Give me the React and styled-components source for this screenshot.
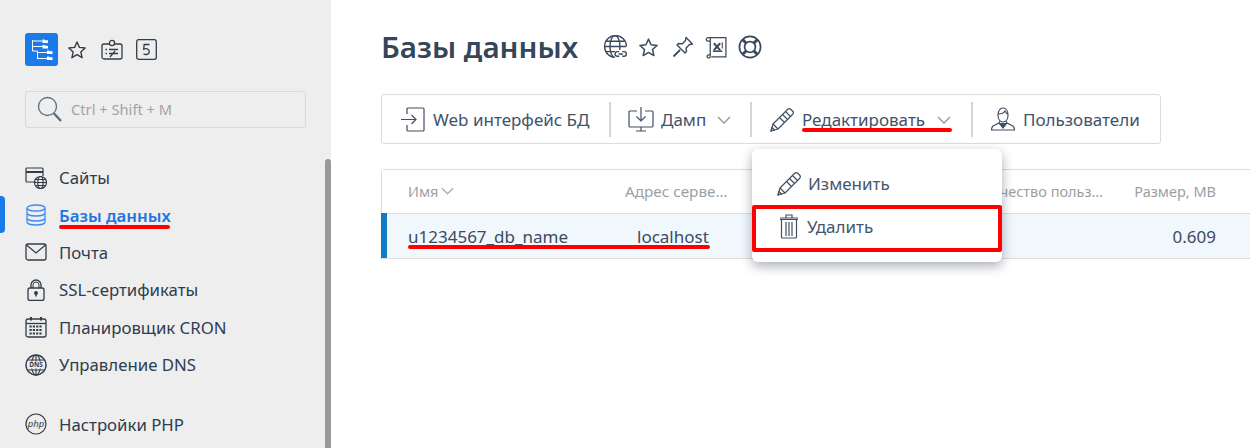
import styled, { createGlobalStyle } from "styled-components";

const GlobalStyle = createGlobalStyle`
	html, body {
		margin: 0;
		padding: 0;
		height: 100%;
		overflow: hidden;
		background: #fff;
	}
	body {
		font-family: "Noto Sans", "Open Sans", sans-serif;
		color: #2f3d50;
	}
`;

const Page = styled.div`
	display: flex;
	width: 1250px;
	height: 448px;
	overflow: hidden;
`;

const Sidebar = styled.aside`
	position: relative;
	flex: 0 0 331px;
	box-sizing: border-box;
	padding: 33px 25px 0;
	background: #eeeeee;
	overflow: hidden;
`;

const Scrollbar = styled.div`
	position: absolute;
	top: 159px;
	right: 0;
	bottom: 0;
	width: 6px;
	background: #999999;
	border-radius: 3px 3px 0 0;
`;

const TopIcons = styled.div`
	display: flex;
	align-items: center;
	height: 33px;
`;

const TreeButton = styled.div`
	display: flex;
	width: 33px;
	height: 33px;
	border-radius: 3px;
	background: #1a7ae8;
`;

const TopIcon = styled.span`
	display: flex;
	margin-left: ${(p) => p.$gap}px;
`;

const Search = styled.div`
	display: flex;
	align-items: center;
	box-sizing: border-box;
	width: 281px;
	height: 37px;
	margin-top: 25px;
	padding-left: 11px;
	border: 1px solid #d8d8d8;
	border-radius: 3px;
	font-size: 14.7px;
	color: #a0a4a8;
	span {
		margin-left: 8px;
		margin-top: -2px;
	}
`;

const Nav = styled.nav`
	margin-top: 31px;
`;

const NavItem = styled.div`
	position: relative;
	display: flex;
	align-items: center;
	height: 37.4px;
	margin-top: ${(p) => (p.$spaced ? "22px" : "0")};
	font-size: 16.8px;
	font-weight: ${(p) => (p.$active ? 600 : 400)};
	color: ${(p) => (p.$active ? "#1f75e0" : "#2f3d50")};
	svg {
		flex: 0 0 22px;
		margin-right: 12px;
	}
`;

const ActiveMark = styled.i`
	position: absolute;
	left: -25px;
	top: 0;
	width: 5px;
	height: 37px;
	background: #1a7ae8;
	border-radius: 0 4px 4px 0;
`;

const Underline = styled.i`
	position: absolute;
	left: ${(p) => p.$left}px;
	top: ${(p) => p.$top}px;
	width: ${(p) => p.$width}px;
	height: 4px;
	background: #ff0000;
	border-radius: 2px;
`;

const Main = styled.main`
	flex: 1;
	min-width: 0;
	padding: 27px 0 0 50px;
`;

const TitleRow = styled.div`
	display: flex;
	align-items: center;
	height: 40px;
`;

const Title = styled.h1`
	margin: 0 25px 0 0;
	font-size: 29.6px;
	line-height: 40px;
	font-weight: 600;
	color: #34465a;
`;

const TitleIcons = styled.div`
	display: flex;
	align-items: center;
	color: #3a4a5c;
`;

const TitleIcon = styled.span`
	display: flex;
	margin-left: ${(p) => p.$gap || 0}px;
`;

const Toolbar = styled.div`
	display: flex;
	align-items: center;
	box-sizing: border-box;
	width: 780px;
	height: 50px;
	margin-top: 27px;
	border: 1px solid #dcdcdc;
	border-radius: 3px;
`;

const ToolButton = styled.div`
	position: relative;
	display: flex;
	align-items: center;
	box-sizing: border-box;
	height: 100%;
	width: ${(p) => p.$width}px;
	padding-left: ${(p) => p.$pad}px;
	font-size: 17px;
	color: #41526a;
	white-space: nowrap;
	svg.main {
		margin-right: ${(p) => p.$gap}px;
	}
	svg.chev {
		position: absolute;
		right: ${(p) => p.$chev}px;
		top: 21px;
	}
`;

const Sep = styled.div`
	flex: 0 0 2px;
	height: 35px;
	background: #d4d4d4;
`;

const Table = styled.div`
	position: relative;
	margin-top: 25px;
	border-top: 1px solid #dcdcdc;
	border-left: 1px solid #dcdcdc;
	border-radius: 4px 0 0 0;
`;

const Row = styled.div`
	display: grid;
	grid-template-columns: 217px 129px 1fr 113px 34px;
	align-items: center;
	height: ${(p) => p.$height}px;
	box-sizing: border-box;
	padding-left: 26px;
	border-bottom: 1px solid #dcdcdc;
	background: ${(p) => (p.$selected ? "#f0f7fd" : "#fff")};
`;

const SelectedBar = styled.i`
	position: absolute;
	left: -1px;
	top: 43px;
	width: 6px;
	height: 45px;
	background: #0f7cc4;
`;

const Head = styled.div`
	display: flex;
	align-items: center;
	justify-content: ${(p) => (p.$end ? "flex-end" : "flex-start")};
	margin-top: -2px;
	font-size: ${(p) => p.$size || 14.5}px;
	color: #9b9fa3;
	white-space: nowrap;
	overflow: hidden;
	svg {
		margin-left: 3px;
	}
`;

const Cell = styled.div`
	font-size: 17px;
	color: #3c4b60;
	text-align: ${(p) => (p.$end ? "right" : "left")};
	padding-left: ${(p) => p.$indent || 0}px;
	white-space: nowrap;
`;

const Menu = styled.div`
	position: absolute;
	left: 752px;
	top: 149px;
	width: 250px;
	height: 113px;
	box-sizing: border-box;
	padding-top: 14px;
	background: #fff;
	border-radius: 6px;
	box-shadow: 0 4px 12px rgba(40, 50, 70, 0.4);
`;

const MenuItem = styled.div`
	display: flex;
	align-items: center;
	height: ${(p) => p.$height}px;
	padding-left: ${(p) => p.$pad}px;
	font-size: 17px;
	color: #46566c;
	svg {
		margin-right: ${(p) => p.$gap}px;
	}
`;

const RedBox = styled.div`
	position: absolute;
	left: 0;
	top: 56px;
	width: 250px;
	height: 47px;
	box-sizing: border-box;
	border: 4px solid #ff0000;
	border-radius: 2px;
`;

const Tree = () => (
	<svg width="33" height="33" viewBox="0 0 33 33" fill="none" stroke="#fff" strokeWidth="1">
		<path d="M7.500 7v11M7.500 8h10M7.500 13.500h10M7.500 18h5M12.500 18v8M12.500 19.500h10M12.500 25.500h10" />
		<path d="M17.500 6.500h2l.5.7h3v2.800h-5.500zM17.500 12h2l.5.7h3v2.800h-5.500zM22 17.500h2l.5.7h3v2.800H22zM22 23.500h2l.5.7h3v2.800H22z" fill="#fff" stroke="none" />
	</svg>
);

const Star = ({ size = 20, color = "#333d48" }) => (
	<svg width={size} height={size} viewBox="0 0 20 20" fill="none" stroke={color} strokeWidth="1.4" strokeLinejoin="round">
		<path d="M10 2l2.400 5.400 5.800.6-4.400 3.900 1.300 5.800-5.100-3-5.100 3 1.300-5.800L1.800 8l5.800-.6z" />
	</svg>
);

const Badge = () => (
	<svg width="22" height="22" viewBox="0 0 22 22" fill="none" stroke="#333d48" strokeWidth="1.3">
		<rect x="1" y="5" width="20" height="15" rx="2" />
		<circle cx="11" cy="4" r="2.600" fill="#eee" />
		<path d="M4.500 10.500h1.500M4.500 14.500h1.500M8 10.500h9M8 14.500h9M9 18l5-6" />
	</svg>
);

const CountBox = () => (
	<svg width="21" height="21" viewBox="0 0 21 21" fill="none">
		<rect x="0.7" y="0.7" width="19.6" height="19.6" rx="2" stroke="#333d48" strokeWidth="1.3" />
		<path d="M13.500 5.500H8.200l-.5 4.600c1.600-.8 5.600-.7 5.600 2.500 0 3-3.800 3.400-5.800 2.300" stroke="#333d48" strokeWidth="1.3" />
	</svg>
);

const Loupe = () => (
	<svg width="26" height="27" viewBox="0 0 26 27" fill="none" stroke="#5a6b7c">
		<circle cx="10.500" cy="10.500" r="9" strokeWidth="1.300" />
		<path d="M17 17.500l7 7.500" strokeWidth="2.400" />
	</svg>
);

const Sites = () => (
	<svg width="22" height="22" viewBox="0 0 22 22" fill="none" stroke="#333d48" strokeWidth="1.2">
		<path d="M12 15H2a1 1 0 0 1-1-1V2a1 1 0 0 1 1-1h15a1 1 0 0 1 1 1v7" />
		<path d="M1 5h17" strokeWidth="2" />
		<circle cx="15.500" cy="15.500" r="6" fill="#eee" />
		<ellipse cx="15.500" cy="15.500" rx="2.600" ry="6" />
		<path d="M9.500 15.500h12M10.500 12.500h10M10.500 18.500h10" />
	</svg>
);

const Database = () => (
	<svg width="22" height="22" viewBox="0 0 22 22" fill="none" stroke="#3f8cef" strokeWidth="1.3">
		<ellipse cx="11" cy="4" rx="9" ry="3" />
		<path d="M2 4v14c0 1.700 4 3 9 3s9-1.300 9-3V4M2 9c0 1.700 4 3 9 3s9-1.300 9-3M2 14c0 1.700 4 3 9 3s9-1.300 9-3" />
	</svg>
);

const Mail = () => (
	<svg width="22" height="22" viewBox="0 0 22 22" fill="none" stroke="#333d48" strokeWidth="1.3">
		<rect x="1" y="3" width="20" height="16" rx="2" />
		<path d="M1.500 4l9.500 8 9.500-8" />
	</svg>
);

const Lock = () => (
	<svg width="22" height="22" viewBox="0 0 22 22" fill="none" stroke="#333d48" strokeWidth="1.3">
		<rect x="3" y="9" width="16" height="12.500" rx="2" />
		<path d="M6 9V6a5 5 0 0 1 10 0v3" />
		<path d="M8 9V6a3 3 0 0 1 6 0v3" strokeWidth="1" />
		<circle cx="11" cy="14" r="1.300" fill="#333d48" />
		<path d="M11 14v3.500" strokeWidth="1.500" />
	</svg>
);

const Calendar = () => (
	<svg width="22" height="22" viewBox="0 0 22 22" fill="none" stroke="#333d48" strokeWidth="1.3">
		<rect x="1" y="3" width="20" height="18" rx="2" />
		<path d="M1 7.500h20" />
		<path d="M6 1v3.500M16 1v3.500" strokeWidth="2" />
		<path d="M4.500 10.500h13M4.500 14h13M4.500 17.500h13" strokeWidth="2.200" strokeDasharray="2.200 1.100" />
	</svg>
);

const Dns = () => (
	<svg width="22" height="22" viewBox="0 0 22 22" fill="none" stroke="#333d48" strokeWidth="1.1">
		<circle cx="11" cy="11" r="10" strokeWidth="1.400" />
		<ellipse cx="11" cy="11" rx="4.500" ry="10" />
		<path d="M2.500 6h17M2.500 16h17M11 1v20" />
		<rect x="4.500" y="7.500" width="13" height="7" fill="#eee" stroke="none" />
		<text x="11" y="13.200" textAnchor="middle" fontSize="6.500" fontWeight="700" fill="#333d48" stroke="none">DNS</text>
	</svg>
);

const Php = () => (
	<svg width="22" height="22" viewBox="0 0 22 22" fill="none" stroke="#333d48" strokeWidth="1.2">
		<circle cx="11" cy="11" r="10" />
		<text x="11" y="13.800" textAnchor="middle" fontSize="9.500" fontStyle="italic" fill="#333d48" stroke="none">php</text>
	</svg>
);

const GlobeLink = () => (
	<svg width="25" height="25" viewBox="0 0 24 24" fill="none" stroke="#3a4a5c" strokeWidth="1.300">
		<path d="M12 21.500A10.500 10.500 0 1 1 22.500 11" />
		<ellipse cx="11.500" cy="11" rx="4.800" ry="10.500" />
		<path d="M1 11h21M2.500 6h18M2.500 16h9" />
		<rect x="11" y="14.500" width="13" height="9" rx="3.700" fill="#fff" stroke="none" />
		<path d="M15.500 16h-1.700a2.200 2.200 0 0 0 0 4.400h1.700M18.500 16h1.700a2.200 2.200 0 0 1 0 4.400h-1.700M15 18.200h4" />
	</svg>
);

const Pin = () => (
	<svg width="22" height="22" viewBox="0 0 22 22" fill="none" stroke="#3a4a5c" strokeWidth="1.4" strokeLinejoin="round">
		<path d="M14 1.500l6.500 6.500-3 .5-3.400 3.400.4 3.600-1.500 1.500-8-8 1.500-1.500 3.600.4 3.400-3.400z" />
		<path d="M8 14L1.500 20.500" strokeWidth="1.800" />
	</svg>
);

const Excel = () => (
	<svg width="23" height="23" viewBox="0 0 22 22" fill="none" stroke="#3a4a5c" strokeWidth="1.200">
		<path d="M3 1.500h17v18.500H6M3 1.500a1.800 1.800 0 0 0-1.800 1.800c0 1 .8 1.700 1.800 1.700h2V1.500M5 5v14.500a1.500 1.500 0 0 1-3 0c0-.8.7-1.500 1.500-1.500H5" />
		<path d="M8.500 7l6 6.500M14.500 7l-6 6.500" strokeWidth="2" />
		<path d="M7.500 14.500h9" strokeWidth="1.500" />
		<path d="M16.500 6v6" strokeWidth="1" />
	</svg>
);

const Lifebuoy = () => (
	<svg width="24" height="24" viewBox="0 0 24 24" fill="none" stroke="#3a4a5c" strokeWidth="1.700">
		<circle cx="12" cy="12" r="10.600" />
		<circle cx="12" cy="12" r="5.400" />
		<path d="M4.500 4.500l3.800 3.800M19.500 4.500l-3.800 3.800M4.500 19.500l3.800-3.800M19.500 19.500l-3.800-3.800" strokeWidth="3" />
	</svg>
);

const Enter = () => (
	<svg className="main" width="24" height="25" viewBox="0 0 24 25" fill="none" stroke="#3f4f63" strokeWidth="1.200">
		<path d="M6 7V2a1 1 0 0 1 1-1h15a1 1 0 0 1 1 1v21a1 1 0 0 1-1 1H7a1 1 0 0 1-1-1v-5" />
		<path d="M0 12.500h15M10.500 8l4.500 4.500-4.500 4.500" />
	</svg>
);

const Download = () => (
	<svg className="main" width="26" height="25" viewBox="0 0 26 25" fill="none" stroke="#3f4f63" strokeWidth="1.200">
		<path d="M9 4H2a1 1 0 0 0-1 1v14a1 1 0 0 0 1 1h22a1 1 0 0 0 1-1V5a1 1 0 0 0-1-1h-7" />
		<path d="M13 0v14M8.500 9.500L13 14l4.500-4.500M13 20v4M8 24h10" />
	</svg>
);

const Pencil = ({ className, size = 25 }) => (
	<svg className={className} width={size} height={size} viewBox="0 0 25 25" fill="none" stroke="#3f4f63" strokeWidth="1.200" strokeLinejoin="round">
		<path d="M1 24l2-7L17.500 2.500a2.500 2.500 0 0 1 3.500 0l1.500 1.500a2.500 2.500 0 0 1 0 3.500L8 22z" />
		<path d="M3 17l5 5M15.500 4.500l5 5M12.500 7.500l5 5M9.500 10.500l5 5M1 24l1-3.500 2.500 2.500z" />
	</svg>
);

const User = () => (
	<svg className="main" width="24" height="24" viewBox="0 0 24 24" fill="none" stroke="#3f4f63" strokeWidth="1.200">
		<path d="M7 8c0-4 2-7 5-7s5 3 5 7-2 7-5 7-5-3-5-7z" />
		<path d="M7 7c3 0 6-1 7-3 1 2 2 3 3 3" />
		<path d="M9 14l-1 2-6 3c-1 1-1.500 2-1.500 4h23c0-2-.5-3-1.500-4l-6-3-1-2" />
		<path d="M8 16l4 5 4-5" fill="#3f4f63" />
	</svg>
);

const Trash = () => (
	<svg width="20" height="25" viewBox="0 0 20 25" fill="none" stroke="#3f4f63" strokeWidth="1.200">
		<path d="M1 4h18M7 4V1h6v3M2.500 6v17a1 1 0 0 0 1 1h13a1 1 0 0 0 1-1V6" />
		<path d="M1 5.500h18M7 8v14M10 8v14M13 8v14" />
	</svg>
);

const Chevron = ({ className, color = "#8d99a6", width = 14 }) => (
	<svg className={className} width={width} height="8" viewBox="0 0 14 8" fill="none" stroke={color} strokeWidth="1.400">
		<path d="M1 1l6 6 6-6" />
	</svg>
);

const navItems = [
	{ label: "Сайты", icon: <Sites /> },
	{ label: "Базы данных", icon: <Database />, active: true },
	{ label: "Почта", icon: <Mail /> },
	{ label: "SSL-сертификаты", icon: <Lock /> },
	{ label: "Планировщик CRON", icon: <Calendar /> },
	{ label: "Управление DNS", icon: <Dns /> },
	{ label: "Настройки PHP", icon: <Php />, spaced: true },
];

export default function App() {
	return (
		<Page>
			<GlobalStyle />
			<Sidebar>
				<TopIcons>
					<TreeButton>
						<Tree />
					</TreeButton>
					<TopIcon $gap={9}>
						<Star />
					</TopIcon>
					<TopIcon $gap={14}>
						<Badge />
					</TopIcon>
					<TopIcon $gap={13}>
						<CountBox />
					</TopIcon>
				</TopIcons>
				<Search>
					<Loupe />
					<span>Ctrl + Shift + M</span>
				</Search>
				<Nav>
					{navItems.map((item) => (
						<NavItem key={item.label} $active={item.active} $spaced={item.spaced}>
							{item.active && <ActiveMark />}
							{item.icon}
							{item.label}
							{item.active && <Underline $left={34} $top={29} $width={111} />}
						</NavItem>
					))}
				</Nav>
				<Scrollbar />
			</Sidebar>
			<Main>
				<TitleRow>
					<Title>Базы данных</Title>
					<TitleIcons>
						<TitleIcon>
							<GlobeLink />
						</TitleIcon>
						<TitleIcon $gap={10}>
							<Star size={21} color="#3a4a5c" />
						</TitleIcon>
						<TitleIcon $gap={13}>
							<Pin />
						</TitleIcon>
						<TitleIcon $gap={11}>
							<Excel />
						</TitleIcon>
						<TitleIcon $gap={10}>
							<Lifebuoy />
						</TitleIcon>
					</TitleIcons>
				</TitleRow>
				<Toolbar>
					<ToolButton $width={227} $pad={19} $gap={8}>
						<Enter />
						Web интерфейс БД
					</ToolButton>
					<Sep />
					<ToolButton $width={139} $pad={17} $gap={7} $chev={19}>
						<Download />
						Дамп
						<Chevron className="chev" />
					</ToolButton>
					<Sep />
					<ToolButton $width={219} $pad={18} $gap={7} $chev={20}>
						<Pencil className="main" />
						Редактировать
						<Chevron className="chev" />
						<Underline $left={50} $top={33} $width={150} />
					</ToolButton>
					<Sep />
					<ToolButton $pad={18} $gap={8}>
						<User />
						Пользователи
					</ToolButton>
				</Toolbar>
				<Table>
					<Row $height={44}>
						<Head>
							Имя
							<Chevron color="#a8aeb4" width={13} />
						</Head>
						<Head $size={15.3}>Адрес серве…</Head>
						<Head $end>Количество польз…</Head>
						<Head $end>Размер, MB</Head>
						<span />
					</Row>
					<Row $height={45} $selected>
						<Cell>u1234567_db_name</Cell>
						<Cell $indent={12}>localhost</Cell>
						<span />
						<Cell $end>0.609</Cell>
						<span />
					</Row>
					<SelectedBar />
					<Underline $left={26} $top={75} $width={302} />
				</Table>
			</Main>
			<Menu>
				<MenuItem $height={40} $pad={25} $gap={6}>
					<Pencil />
					Изменить
				</MenuItem>
				<MenuItem $height={46} $pad={27} $gap={8}>
					<Trash />
					Удалить
				</MenuItem>
				<RedBox />
			</Menu>
		</Page>
	);
}
